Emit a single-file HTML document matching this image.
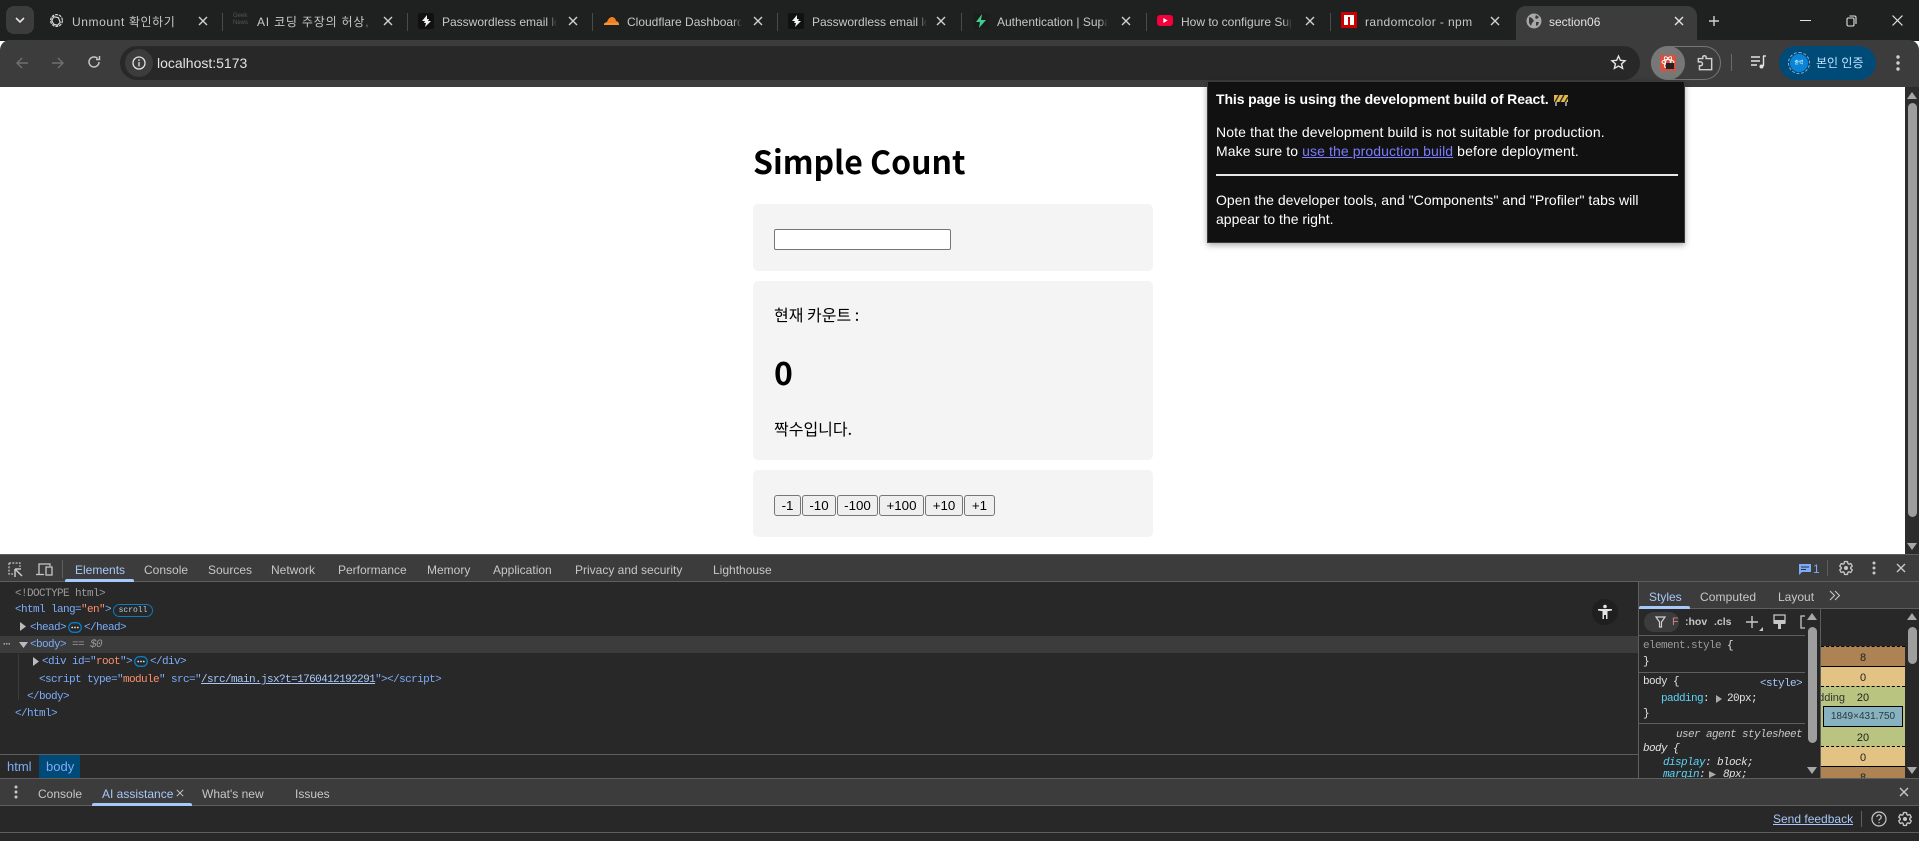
<!DOCTYPE html>
<html lang="en"><head><meta charset="utf-8"><title>section06</title>
<style>
*{box-sizing:border-box}
html,body{margin:0;padding:0;width:1919px;height:841px;overflow:hidden;background:#fff}
body{position:relative;font-family:"Liberation Sans","Noto Sans CJK KR",sans-serif}
.a{position:absolute}
.t{position:absolute;white-space:nowrap;line-height:16px;height:16px}
.tab{color:#c7c7c7;font-size:12px;overflow:hidden;width:115px;top:14px;-webkit-mask-image:linear-gradient(90deg,#000 92%,transparent 100%)}
.x{position:absolute;width:10px;height:10px}
.sep{position:absolute;width:1px;height:18px;top:13px;background:#4a4a4a}
.dt{font-size:12px;color:#c7c7c7}
.m{font-family:"Liberation Mono",monospace;font-size:11px;letter-spacing:-.6px;color:#7cacf8}
.o{color:#fc8f6f}.g{color:#9a9a9a}.w{color:#e3e3e3}.c{color:#5cd5fb}
.card{position:absolute;left:753px;width:400px;background:#f4f4f4;border-radius:5px}
.btn{position:absolute;top:495px;height:21px;background:#efefef;border:1px solid #767676;border-radius:3px;font-size:13.33px;line-height:19px;text-align:center;color:#000}
.el{display:inline-block;vertical-align:-3px;margin:0 2px;width:14px;height:11px}
.pop{font-size:14px;color:#fff}
.bm{position:absolute;left:1821px;width:84px;text-align:center;color:#222;font-size:11px;line-height:14px}
</style></head><body>

<!-- Browser frame -->
<div class="a" style="left:0;top:0;width:1919px;height:41px;background:#1f2020"></div>
<div class="a" style="left:0;top:40px;width:1919px;height:47px;background:#3c3c3c;border-radius:10px 10px 0 0"></div>

<!-- tab switcher -->
<div class="a" style="left:6px;top:6px;width:28px;height:28px;background:#3c3c3c;border-radius:8px"></div>
<svg class="a" style="left:14px;top:15px" width="12" height="10" viewBox="0 0 12 10"><path d="M2 3l4 4 4-4" stroke="#e3e3e3" stroke-width="1.6" fill="none"/></svg>

<!-- Tab separators -->
<div class="sep" style="left:222px"></div><div class="sep" style="left:407px"></div><div class="sep" style="left:592px"></div><div class="sep" style="left:777px"></div><div class="sep" style="left:961px"></div><div class="sep" style="left:1146px"></div><div class="sep" style="left:1330px"></div>

<!-- Tab 1 -->
<svg class="a" style="left:49px;top:13px" width="15" height="15" viewBox="0 0 16 16" fill="none" stroke="#d5d5d5" stroke-width="1.3"><circle cx="8" cy="8" r="6.3" stroke-dasharray="3 1"/><path d="M5 4l5 1 2 5-3 3-4-1-2-4z"/></svg>
<div class="t tab" style="left:72px;letter-spacing:.6px">Unmount 확인하기</div>
<!-- Tab 2 -->
<div class="a" style="left:233px;top:13px;width:16px;font-size:6px;line-height:7px;color:#555">Geek<br>News</div>
<div class="t tab" style="left:257px;letter-spacing:.8px">AI 코딩 주장의 허상,</div>
<!-- Tab 3 -->
<div class="a" style="left:418px;top:13px;width:16px;height:16px;background:#111;border-radius:2px"></div>
<svg class="a" style="left:421px;top:15px" width="11" height="12" viewBox="0 0 11 12"><path d="M6 0L1 6h3l-1 2h2L4 12l6-6H7l1-2H6z" fill="#f2f2f2"/></svg>
<div class="t tab" style="left:442px">Passwordless email lo</div>
<!-- Tab 4 -->
<svg class="a" style="left:603px;top:16px" width="17" height="10" viewBox="0 0 17 10"><path d="M1 9c0-2 2-3 3-3 1-3 3-5 5-5s4 2 4 4c2 0 3 2 3 4z" fill="#f38020"/><path d="M1 8h15" stroke="#fbad41" stroke-width="1"/></svg>
<div class="t tab" style="left:627px">Cloudflare Dashboard</div>
<!-- Tab 5 -->
<div class="a" style="left:788px;top:13px;width:16px;height:16px;background:#111;border-radius:2px"></div>
<svg class="a" style="left:791px;top:15px" width="11" height="12" viewBox="0 0 11 12"><path d="M6 0L1 6h3l-1 2h2L4 12l6-6H7l1-2H6z" fill="#f2f2f2"/></svg>
<div class="t tab" style="left:812px">Passwordless email lo</div>
<!-- Tab 6 -->
<div class="a" style="left:973px;top:13px;width:16px;height:16px;background:#1c1c1c;border-radius:2px"></div>
<svg class="a" style="left:975px;top:14px" width="12" height="14" viewBox="0 0 12 14"><path d="M7 0L1 8h4l-1 6 7-8H6z" fill="#3ecf8e"/></svg>
<div class="t tab" style="left:997px;width:111px">Authentication | Supabase</div>
<!-- Tab 7 -->
<div class="a" style="left:1157px;top:15px;width:16px;height:11px;background:#f6003c;border-radius:3px"></div>
<svg class="a" style="left:1163px;top:18px" width="5" height="5" viewBox="0 0 6 7"><path d="M0 0l6 3.5L0 7z" fill="#fff"/></svg>
<div class="t tab" style="left:1181px;width:111px">How to configure Supa</div>
<!-- Tab 8 -->
<div class="a" style="left:1341px;top:12px;width:16px;height:16px;background:#c00"></div>
<div class="a" style="left:1344px;top:15px;width:10px;height:10px;background:#fff"></div>
<div class="a" style="left:1348px;top:17px;width:2px;height:8px;background:#c00"></div>
<div class="t tab" style="left:1365px;letter-spacing:.4px;-webkit-mask-image:none">randomcolor - npm</div>

<!-- Active tab -->
<div class="a" style="left:1516px;top:6px;width:181px;height:35px;background:#3c3c3c;border-radius:10px 10px 0 0"></div>
<svg class="a" style="left:1526px;top:13px" width="16" height="16" viewBox="0 0 16 16"><circle cx="8" cy="8" r="7.5" fill="#a8a8a8"/><path d="M3 4l3 1 2 3-2 2-1 3-2-3zM10 2l3 2-2 2-2-1zM10 9l3 0-1 3-2 1z" fill="#3c3c3c"/></svg>
<div class="t tab" style="left:1549px;color:#e3e3e3">section06</div>

<!-- Tab closes -->
<svg width="0" height="0" style="position:absolute"><symbol id="xx" viewBox="0 0 10 10"><path d="M1 1l8 8M9 1L1 9" stroke="currentColor" stroke-width="1.4" fill="none"/></symbol></svg>
<svg class="x" style="left:198px;top:16px;color:#d0d0d0"><use href="#xx"/></svg>
<svg class="x" style="left:383px;top:16px;color:#d0d0d0"><use href="#xx"/></svg>
<svg class="x" style="left:568px;top:16px;color:#d0d0d0"><use href="#xx"/></svg>
<svg class="x" style="left:753px;top:16px;color:#d0d0d0"><use href="#xx"/></svg>
<svg class="x" style="left:936px;top:16px;color:#d0d0d0"><use href="#xx"/></svg>
<svg class="x" style="left:1121px;top:16px;color:#d0d0d0"><use href="#xx"/></svg>
<svg class="x" style="left:1305px;top:16px;color:#d0d0d0"><use href="#xx"/></svg>
<svg class="x" style="left:1490px;top:16px;color:#d0d0d0"><use href="#xx"/></svg>
<svg class="x" style="left:1674px;top:16px;color:#e3e3e3"><use href="#xx"/></svg>
<svg class="a" style="left:1708px;top:15px" width="12" height="12" viewBox="0 0 12 12"><path d="M6 1v10M1 6h10" stroke="#d0d0d0" stroke-width="1.4"/></svg>

<!-- Window controls -->
<div class="a" style="left:1800px;top:20px;width:11px;height:1.4px;background:#e3e3e3"></div>
<svg class="a" style="left:1846px;top:15px" width="11" height="12" viewBox="0 0 11 12" fill="none" stroke="#e3e3e3" stroke-width="1.1"><rect x="1" y="3" width="7" height="8" rx="1.2"/><path d="M3.5 1h5a1.5 1.5 0 0 1 1.5 1.5V9"/></svg>
<svg class="a" style="left:1892px;top:15px" width="11" height="11" viewBox="0 0 10 10"><path d="M.5.5l9 9M9.5.5l-9 9" stroke="#e3e3e3" stroke-width="1"/></svg>

<!-- Toolbar -->
<svg class="a" style="left:15px;top:56px" width="14" height="14" viewBox="0 0 14 14" fill="none" stroke="#707070" stroke-width="1.4"><path d="M13 7H2M7 2L2 7l5 5"/></svg>
<svg class="a" style="left:51px;top:56px" width="14" height="14" viewBox="0 0 14 14" fill="none" stroke="#707070" stroke-width="1.4"><path d="M1 7h11M7 2l5 5-5 5"/></svg>
<svg class="a" style="left:87px;top:55px" width="14" height="14" viewBox="0 0 14 14" fill="none" stroke="#c7c7c7" stroke-width="1.5"><path d="M12 7a5 5 0 1 1-1.5-3.6"/><path d="M12.5 1v3.5H9" /></svg>

<div class="a" style="left:120px;top:46px;width:1520px;height:34px;background:#282828;border-radius:17px"></div>
<div class="a" style="left:125px;top:49px;width:28px;height:28px;background:#3c3c3c;border-radius:14px"></div>
<svg class="a" style="left:131px;top:55px" width="16" height="16" viewBox="0 0 16 16" fill="none" stroke="#e3e3e3" stroke-width="1.3"><circle cx="8" cy="8" r="6"/><path d="M8 7v4.5M8 4.4v1.6"/></svg>
<div class="t" style="left:157px;top:55px;font-size:14px;color:#e3e3e3">localhost:5173</div>
<svg class="a" style="left:1610px;top:54px" width="17" height="17" viewBox="0 0 24 24" fill="none" stroke="#e3e3e3" stroke-width="2"><path d="M12 3l2.7 6 6.5.6-4.9 4.3 1.5 6.4L12 17l-5.8 3.3 1.5-6.4-4.9-4.3 6.5-.6z"/></svg>

<!-- Extensions pill -->
<div class="a" style="left:1651px;top:46px;width:70px;height:34px;border:1px solid #777;border-radius:17px"></div>
<div class="a" style="left:1651px;top:46px;width:34px;height:34px;background:#777;border-radius:17px"></div>
<div class="a" style="left:1660px;top:55px;width:16px;height:16px;background:#d9503f"></div>
<svg class="a" style="left:1660px;top:55px" width="16" height="16" viewBox="0 0 16 16"><g fill="none" stroke="#fff" stroke-width=".9"><ellipse cx="8" cy="7" rx="6" ry="2.4"/><ellipse cx="8" cy="7" rx="6" ry="2.4" transform="rotate(60 8 7)"/><ellipse cx="8" cy="7" rx="6" ry="2.4" transform="rotate(120 8 7)"/></g><rect x="6" y="8" width="8" height="6" fill="#222"/></svg>
<svg class="a" style="left:1695px;top:53px" width="20" height="20" viewBox="0 0 18 18" fill="none" stroke="#d0d0d0" stroke-width="1.3"><path d="M3 5h4V3.500a1.600 1.600 0 0 1 3 0V5h5v10H4v-3.500h1a1.700 1.700 0 0 0 0-3.500H3z"/></svg>
<div class="a" style="left:1731px;top:54px;width:1px;height:17px;background:#6a6a6a"></div>
<svg class="a" style="left:1750px;top:55px" width="17" height="15" viewBox="0 0 17 15" fill="none" stroke="#e3e3e3" stroke-width="1.4"><path d="M1 2h9M1 6h9M1 10h6"/><path d="M13.500 1v10"/><circle cx="11.500" cy="11.500" r="2" fill="#e3e3e3" stroke="none"/><path d="M13 1h3"/></svg>

<!-- Profile -->
<div class="a" style="left:1779px;top:46px;width:97px;height:34px;background:#004a77;border-radius:17px"></div>
<div class="a" style="left:1790px;top:54px;width:18px;height:18px;background:#0b84d8;border-radius:9px;outline:1px dashed #8fb8d6;outline-offset:1px;color:#dff;font-size:5px;line-height:18px;text-align:center">출력</div>
<div class="t" style="left:1816px;top:55px;font-size:12px;color:#c2e7ff">본인 인증</div>
<svg class="a" style="left:1896px;top:54px" width="4" height="18" viewBox="0 0 4 18"><circle cx="2" cy="3" r="1.700" fill="#d0d0d0"/><circle cx="2" cy="9" r="1.700" fill="#d0d0d0"/><circle cx="2" cy="15" r="1.700" fill="#d0d0d0"/></svg>

<!-- Page -->
<div class="a" style="left:0;top:87px;width:1905px;height:467px;background:#fff"></div>
<div class="a" style="left:753px;top:141px;font-family:'Noto Sans CJK KR','Liberation Sans',sans-serif;font-weight:700;font-size:32px;line-height:40px;color:#000;white-space:nowrap">Simple Count</div>

<div class="card" style="top:204px;height:67px"></div>
<div class="a" style="left:774px;top:229px;width:177px;height:21px;background:#fff;border:1px solid #767676;border-radius:2px"></div>

<div class="card" style="top:281px;height:179px"></div>
<div class="a" style="left:774px;top:302px;font-family:'Noto Sans CJK KR','Liberation Sans',sans-serif;font-size:16px;line-height:24px;color:#000;white-space:nowrap">현재 카운트 :</div>
<div class="a" style="left:774px;top:352px;font-family:'Noto Sans CJK KR','Liberation Sans',sans-serif;font-weight:700;font-size:32px;line-height:40px;color:#000">0</div>
<div class="a" style="left:774px;top:416px;font-family:'Noto Sans CJK KR','Liberation Sans',sans-serif;font-size:16px;line-height:24px;color:#000;white-space:nowrap">짝수입니다.</div>

<div class="card" style="top:470px;height:67px"></div>
<div class="btn" style="left:774px;width:27px">-1</div>
<div class="btn" style="left:802px;width:34px">-10</div>
<div class="btn" style="left:837px;width:41px">-100</div>
<div class="btn" style="left:879px;width:45px">+100</div>
<div class="btn" style="left:925px;width:38px">+10</div>
<div class="btn" style="left:964px;width:31px">+1</div>

<!-- Page scrollbar -->
<div class="a" style="left:1905px;top:87px;width:14px;height:467px;background:#2c2c2c"></div>
<svg class="a" style="left:1907px;top:92px" width="10" height="7"><path d="M5 0l5 7H0z" fill="#a8a8a8"/></svg>
<div class="a" style="left:1908px;top:103px;width:9px;height:414px;background:#9e9e9e;border-radius:5px"></div>
<svg class="a" style="left:1907px;top:543px" width="10" height="7"><path d="M0 0h10L5 7z" fill="#a8a8a8"/></svg>

<!-- Popup -->
<div class="a" style="left:1207px;top:81px;width:478px;height:162px;background:#111;border:1px solid #3a3a3a;box-shadow:0 2px 6px rgba(0,0,0,.35)"></div>
<div class="t pop" style="left:1216px;top:91px;font-weight:700;letter-spacing:-.1px">This page is using the development build of React.</div>
<svg class="a" style="left:1554px;top:94px" width="14" height="12" viewBox="0 0 14 12"><rect x="0" y="1" width="14" height="7" fill="#e8b84a"/><path d="M1 8l4-7M6 8l4-7M11 8l3-5" stroke="#333" stroke-width="1.500"/><path d="M2 8v4M12 8v4" stroke="#b7b7b7" stroke-width="1.500"/></svg>
<div class="t pop" style="left:1216px;top:124px;letter-spacing:.13px">Note that the development build is not suitable for production.</div>
<div class="t pop" style="left:1216px;top:143px;letter-spacing:.1px">Make sure to <span style="color:#7a7dff;text-decoration:underline">use the production build</span> before deployment.</div>
<div class="a" style="left:1216px;top:174px;width:462px;height:2px;background:#e8e8e8"></div>
<div class="t pop" style="left:1216px;top:192px;letter-spacing:.04px">Open the developer tools, and "Components" and "Profiler" tabs will</div>
<div class="t pop" style="left:1216px;top:211px">appear to the right.</div>

<!-- DevTools -->
<div class="a" style="left:0;top:554px;width:1919px;height:287px;background:#282828"></div>
<div class="a" style="left:0;top:554px;width:1919px;height:28px;background:#3c3c3c;border-top:1px solid #5e5e5e;border-bottom:1px solid #5e5e5e"></div>
<svg class="a" style="left:8px;top:562px" width="16" height="16" viewBox="0 0 16 16" fill="none" stroke="#c7c7c7" stroke-width="1.200"><path d="M1 1h11v4M1 1v11h4" stroke-dasharray="2 1.300"/><path d="M7 7v8M7 7h6M7 7l7 7" stroke-width="1.500"/></svg>
<svg class="a" style="left:36px;top:562px" width="17" height="15" viewBox="0 0 17 15" fill="none" stroke="#c7c7c7" stroke-width="1.300"><path d="M3 12V2h11v2"/><path d="M0 12.500h8"/><rect x="10" y="5" width="6" height="8"/></svg>
<div class="a" style="left:62px;top:560px;width:1px;height:18px;background:#5e5e5e"></div>
<div class="a" style="left:65px;top:579px;width:69px;height:3px;background:#a8c7fa;border-radius:2px 2px 0 0"></div>
<div class="t dt" style="left:75px;top:562px;color:#a8c7fa">Elements</div>
<div class="t dt" style="left:144px;top:562px">Console</div>
<div class="t dt" style="left:208px;top:562px">Sources</div>
<div class="t dt" style="left:271px;top:562px">Network</div>
<div class="t dt" style="left:338px;top:562px">Performance</div>
<div class="t dt" style="left:427px;top:562px">Memory</div>
<div class="t dt" style="left:493px;top:562px">Application</div>
<div class="t dt" style="left:575px;top:562px">Privacy and security</div>
<div class="t dt" style="left:713px;top:562px">Lighthouse</div>

<svg class="a" style="left:1799px;top:563px" width="12" height="12" viewBox="0 0 12 12"><path d="M0 1h12v8H3l-3 3z" fill="#7cacf8"/><path d="M2 4h8M2 6.500h5" stroke="#28323f" stroke-width="1"/></svg>
<div class="t dt" style="left:1813px;top:561px;color:#7cacf8">1</div>
<div class="a" style="left:1827px;top:560px;width:1px;height:16px;background:#5e5e5e"></div>
<svg class="a" style="left:1838px;top:560px" width="16" height="16" viewBox="0 0 24 24" fill="none" stroke="#c7c7c7" stroke-width="2"><path d="M19.140 12.940c.04-.3.06-.61.06-.94 0-.32-.02-.64-.07-.94l2.030-1.580a.49.490 0 0 0 .12-.61l-1.920-3.320a.488.488 0 0 0-.59-.22l-2.390.96c-.5-.38-1.030-.7-1.620-.94l-.36-2.540a.484.484 0 0 0-.48-.41h-3.840c-.24 0-.43.17-.47.41l-.36 2.540c-.59.24-1.130.57-1.620.94l-2.390-.96c-.22-.08-.47 0-.59.22L2.740 8.870c-.12.21-.08.47.12.61l2.030 1.580c-.05.3-.09.63-.09.94s.02.64.07.94l-2.030 1.580a.49.490 0 0 0-.12.61l1.920 3.320c.12.22.37.29.59.22l2.390-.96c.5.38 1.030.7 1.620.94l.36 2.540c.05.24.24.41.48.41h3.840c.24 0 .44-.17.47-.41l.36-2.540c.59-.24 1.130-.56 1.620-.94l2.390.96c.22.08.47 0 .59-.22l1.920-3.320c.12-.22.07-.47-.12-.61l-2.010-1.580z"/><circle cx="12" cy="12" r="3" fill="#c7c7c7" stroke="none"/></svg>
<svg class="a" style="left:1872px;top:561px" width="4" height="14"><circle cx="2" cy="2" r="1.500" fill="#c7c7c7"/><circle cx="2" cy="7" r="1.500" fill="#c7c7c7"/><circle cx="2" cy="12" r="1.500" fill="#c7c7c7"/></svg>
<svg class="x" style="left:1896px;top:563px;color:#c7c7c7"><use href="#xx"/></svg>

<!-- DOM tree -->
<svg width="0" height="0" style="position:absolute"><symbol id="dots" viewBox="0 0 14 11"><rect x=".7" y=".7" width="12.600" height="9.600" rx="4.800" fill="none" stroke="#0a7cc0" stroke-width="1.300"/><circle cx="4.200" cy="5.500" r=".9" fill="#e3e3e3"/><circle cx="7" cy="5.500" r=".9" fill="#e3e3e3"/><circle cx="9.800" cy="5.500" r=".9" fill="#e3e3e3"/></symbol></svg>
<div class="a" style="left:0;top:636px;width:1638px;height:17px;background:#3c3c3c"></div>
<div class="a" style="left:18px;top:654px;width:1px;height:46px;background:#3c3c3c"></div>
<div class="t m g" style="left:15px;top:586px">&lt;!DOCTYPE html&gt;</div>
<div class="t m" style="left:15px;top:602px">&lt;html lang=<span class="o">"en"</span>&gt;</div>
<div class="a" style="left:113px;top:604px;width:40px;height:13px;border:1px solid #0a7cc0;border-radius:7px;color:#bcd;font-family:'Liberation Mono',monospace;font-size:8px;line-height:11px;text-align:center">scroll</div>
<svg class="a" style="left:20px;top:622px" width="6" height="9"><path d="M0 0l6 4.500L0 9z" fill="#bbb"/></svg>
<div class="t m" style="left:30px;top:620px">&lt;head&gt;<svg class="el"><use href="#dots"/></svg>&lt;/head&gt;</div>
<div class="t" style="left:3px;top:636px;font-size:9px;color:#c7c7c7;letter-spacing:-.5px;font-weight:700">···</div>
<svg class="a" style="left:19px;top:642px" width="9" height="6"><path d="M0 0h9L4.500 6z" fill="#bbb"/></svg>
<div class="t m" style="left:30px;top:637px">&lt;body&gt;<span class="g" style="font-style:italic"> == $0</span></div>
<svg class="a" style="left:33px;top:657px" width="6" height="9"><path d="M0 0l6 4.500L0 9z" fill="#bbb"/></svg>
<div class="t m" style="left:42px;top:654px">&lt;div id="<span class="o">root</span>"&gt;<svg class="el"><use href="#dots"/></svg>&lt;/div&gt;</div>
<div class="t m" style="left:39px;top:672px">&lt;script type="<span class="o">module</span>" src="<span style="text-decoration:underline;color:#a8c7fa">/src/main.jsx?t=1760412192291</span>"&gt;&lt;/script&gt;</div>
<div class="t m" style="left:27px;top:689px">&lt;/body&gt;</div>
<div class="t m" style="left:15px;top:706px">&lt;/html&gt;</div>

<div class="a" style="left:1592px;top:599px;width:26px;height:26px;background:#1f1f1f;border-radius:13px"></div>
<svg class="a" style="left:1597px;top:604px" width="16" height="16" viewBox="0 0 16 16" fill="#e3e3e3"><circle cx="8" cy="2.500" r="1.800"/><path d="M1 5h14v1.500l-4.500.8V15H9v-4H7v4H5.500V7.300L1 6.500z"/></svg>

<!-- Breadcrumbs -->
<div class="a" style="left:0;top:754px;width:1638px;height:1px;background:#5e5e5e"></div>
<div class="a" style="left:39px;top:755px;width:41px;height:23px;background:#004a77"></div>
<div class="t" style="left:7px;top:759px;color:#7cacf8;font-size:13px">html</div>
<div class="t" style="left:46px;top:759px;color:#7cacf8;font-size:13px">body</div>

<!-- Sidebar -->
<div class="a" style="left:1638px;top:582px;width:1px;height:196px;background:#5e5e5e"></div>
<div class="a" style="left:1639px;top:582px;width:280px;height:27px;background:#3c3c3c;border-bottom:1px solid #5e5e5e"></div>
<div class="a" style="left:1639px;top:606px;width:51px;height:3px;background:#a8c7fa;border-radius:2px 2px 0 0"></div>
<div class="t dt" style="left:1649px;top:589px;color:#a8c7fa">Styles</div>
<div class="t dt" style="left:1700px;top:589px;letter-spacing:.1px">Computed</div>
<div class="t dt" style="left:1778px;top:589px">Layout</div>
<svg class="a" style="left:1829px;top:590px" width="12" height="11" viewBox="0 0 12 11" fill="none" stroke="#c7c7c7" stroke-width="1.100"><path d="M1 1l4.500 4.500L1 10M6 1l4.500 4.500L6 10"/></svg>

<div class="a" style="left:1644px;top:612px;width:35px;height:20px;background:#3c3c3c;border-radius:10px"></div>
<svg class="a" style="left:1655px;top:616px" width="11" height="12" viewBox="0 0 11 12" fill="none" stroke="#d0d0d0" stroke-width="1.200"><path d="M1 1h9L6.500 6v5h-2V6z"/></svg>
<div class="t" style="left:1672px;top:614px;font-size:11px;color:#d08080;width:6px;overflow:hidden">F</div>
<div class="t" style="left:1685px;top:614px;font-size:10.500px;font-weight:700;color:#c7c7c7">:hov</div>
<div class="t" style="left:1714px;top:614px;font-size:10.500px;font-weight:700;color:#c7c7c7">.cls</div>
<svg class="a" style="left:1745px;top:615px" width="18" height="16" viewBox="0 0 18 16"><path d="M7 1v12M1 7h12" stroke="#c7c7c7" stroke-width="1.400"/><path d="M18 16h-4l4-4z" fill="#c7c7c7"/></svg>
<svg class="a" style="left:1773px;top:614px" width="13" height="16" viewBox="0 0 13 16"><path d="M1 1h11v8H1z" fill="none" stroke="#c7c7c7" stroke-width="1.300"/><path d="M1 6h11v4H1z" fill="#c7c7c7"/><path d="M5 10h3v5H5z" fill="#c7c7c7"/></svg>
<svg class="a" style="left:1800px;top:615px" width="5" height="14"><path d="M5 1H1v12h4" fill="none" stroke="#c7c7c7" stroke-width="1.300"/></svg>

<div class="a" style="left:1639px;top:635px;width:166px;height:1px;background:#5e5e5e"></div>
<div class="a" style="left:1639px;top:672px;width:166px;height:1px;background:#5e5e5e"></div>
<div class="a" style="left:1639px;top:723px;width:166px;height:1px;background:#5e5e5e"></div>
<div class="t m g" style="left:1643px;top:638px">element.style <span class="w">{</span></div>
<div class="t m w" style="left:1643px;top:654px">}</div>
<div class="t m w" style="left:1643px;top:674px">body {</div>
<div class="t m" style="left:1760px;top:676px;color:#a8c7fa">&lt;style&gt;</div>
<div class="t m c" style="left:1661px;top:691px">padding<span class="w">:</span></div>
<svg class="a" style="left:1716px;top:695px" width="6" height="8"><path d="M0 0l6 4-6 4z" fill="#aaa"/></svg>
<div class="t m w" style="left:1727px;top:691px">20px;</div>
<div class="t m w" style="left:1643px;top:706px">}</div>
<div class="t m" style="left:1676px;top:727px;color:#c7c7c7;font-style:italic">user agent stylesheet</div>
<div class="t m w" style="left:1643px;top:741px;font-style:italic">body {</div>
<div class="t m c" style="left:1663px;top:755px;font-style:italic">display<span class="w">: block;</span></div>
<div style="position:absolute;left:1639px;top:760px;width:166px;height:18px;overflow:hidden"><div class="t m c" style="left:24px;top:7px;font-style:italic">margin<span class="w">:</span></div><svg class="a" style="left:70px;top:11px" width="7" height="7"><path d="M0 0l7 3.500L0 7z" fill="#aaa"/></svg><div class="t m w" style="left:84px;top:7px;font-style:italic">8px;</div></div>

<!-- Sidebar scrollbar -->
<svg class="a" style="left:1807px;top:613px" width="10" height="7"><path d="M5 0l5 7H0z" fill="#a8a8a8"/></svg>
<div class="a" style="left:1808px;top:627px;width:9px;height:116px;background:#9e9e9e;border-radius:5px"></div>
<svg class="a" style="left:1807px;top:767px" width="10" height="7"><path d="M0 0h10L5 7z" fill="#a8a8a8"/></svg>
<div class="a" style="left:1820px;top:609px;width:1px;height:169px;background:#5e5e5e"></div>

<!-- Box model -->
<div class="a" style="left:1821px;top:646px;width:84px;height:20px;background:#ad8354;border-top:1px dashed #000"></div>
<div class="a" style="left:1821px;top:666px;width:84px;height:20px;background:#e2c383;border-top:1px solid #000"></div>
<div class="a" style="left:1821px;top:686px;width:84px;height:60px;background:#b8c47f;border-top:1px dashed #000"></div>
<div class="a" style="left:1821px;top:746px;width:84px;height:20px;background:#e2c383;border-top:1px dashed #000"></div>
<div class="a" style="left:1821px;top:766px;width:84px;height:12px;background:#ad8354;border-top:1px solid #000;overflow:hidden"></div>
<div class="bm" style="top:651px">8</div>
<div class="bm" style="top:671px">0</div>
<div class="bm" style="top:691px">20</div>
<div class="a" style="left:1821px;top:691px;color:#333;font-size:11px;line-height:14px;width:24px;overflow:hidden;direction:rtl">padding</div>
<div class="a" style="left:1823px;top:706px;width:80px;height:21px;background:#88b2bf;border:1px solid #000;font-size:10px;line-height:20px;text-align:center;color:#2b3a40">1849×431.750</div>
<div class="bm" style="top:731px">20</div>
<div class="bm" style="top:751px">0</div>
<div class="a" style="left:1821px;top:771px;width:84px;height:7px;overflow:hidden;text-align:center;color:#222;font-size:11px;line-height:14px">8</div>

<svg class="a" style="left:1907px;top:613px" width="10" height="7"><path d="M5 0l5 7H0z" fill="#a8a8a8"/></svg>
<div class="a" style="left:1908px;top:627px;width:9px;height:37px;background:#9e9e9e;border-radius:5px"></div>
<svg class="a" style="left:1907px;top:767px" width="10" height="7"><path d="M0 0h10L5 7z" fill="#a8a8a8"/></svg>

<!-- Drawer -->
<div class="a" style="left:0;top:778px;width:1919px;height:28px;background:#3c3c3c;border-top:1px solid #5e5e5e;border-bottom:1px solid #5e5e5e"></div>
<svg class="a" style="left:14px;top:785px" width="4" height="14"><circle cx="2" cy="2" r="1.500" fill="#c7c7c7"/><circle cx="2" cy="7" r="1.500" fill="#c7c7c7"/><circle cx="2" cy="12" r="1.500" fill="#c7c7c7"/></svg>
<div class="t dt" style="left:38px;top:786px">Console</div>
<div class="t dt" style="left:102px;top:786px;color:#a8c7fa">AI assistance</div>
<svg class="a" style="left:176px;top:789px;color:#c7c7c7" width="8" height="8" viewBox="0 0 10 10"><path d="M1 1l8 8M9 1L1 9" stroke="currentColor" stroke-width="1.200"/></svg>
<div class="a" style="left:92px;top:803px;width:100px;height:3px;background:#a8c7fa;border-radius:2px 2px 0 0"></div>
<div class="t dt" style="left:202px;top:786px">What's new</div>
<div class="t dt" style="left:295px;top:786px">Issues</div>
<svg class="x" style="left:1899px;top:787px;color:#c7c7c7"><use href="#xx"/></svg>

<div class="t dt" style="left:1773px;top:811px;color:#a8c7fa;text-decoration:underline">Send feedback</div>
<div class="a" style="left:1861px;top:811px;width:1px;height:16px;background:#5e5e5e"></div>
<svg class="a" style="left:1871px;top:811px" width="16" height="16" viewBox="0 0 16 16" fill="none" stroke="#c7c7c7" stroke-width="1.200"><circle cx="8" cy="8" r="7"/><path d="M5.800 6a2.200 2.200 0 1 1 3.300 2c-.7.4-1.100.8-1.100 1.600M8 11v1.300"/></svg>
<svg class="a" style="left:1897px;top:811px" width="16" height="16" viewBox="0 0 24 24" fill="none" stroke="#c7c7c7" stroke-width="2"><path d="M19.140 12.940c.04-.3.06-.61.06-.94 0-.32-.02-.64-.07-.94l2.030-1.580a.49.490 0 0 0 .12-.61l-1.920-3.320a.488.488 0 0 0-.59-.22l-2.390.96c-.5-.38-1.030-.7-1.620-.94l-.36-2.540a.484.484 0 0 0-.48-.41h-3.840c-.24 0-.43.17-.47.41l-.36 2.540c-.59.24-1.130.57-1.620.94l-2.390-.96c-.22-.08-.47 0-.59.22L2.740 8.870c-.12.21-.08.47.12.61l2.030 1.580c-.05.3-.09.63-.09.94s.02.64.07.94l-2.030 1.580a.49.490 0 0 0-.12.61l1.920 3.320c.12.22.37.29.59.22l2.390-.96c.5.38 1.030.7 1.620.94l.36 2.540c.05.24.24.41.48.41h3.840c.24 0 .44-.17.47-.41l.36-2.540c.59-.24 1.130-.56 1.620-.94l2.390.96c.22.08.47 0 .59-.22l1.920-3.320c.12-.22.07-.47-.12-.61l-2.010-1.580z"/><circle cx="12" cy="12" r="3" fill="#c7c7c7" stroke="none"/></svg>
<div class="a" style="left:0;top:832px;width:1919px;height:1px;background:#5e5e5e"></div>
</body></html>
